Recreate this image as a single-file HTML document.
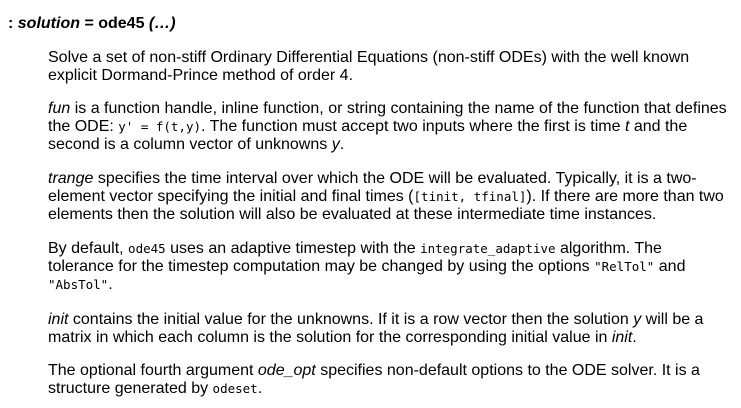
<!DOCTYPE html>
<html><head><style>
html,body{margin:0;padding:0;background:#fff;}
body{width:741px;height:408px;overflow:hidden;font-family:"Liberation Sans",sans-serif;font-size:16px;color:#000;}
.h{position:absolute;left:8px;top:15px;font-weight:bold;line-height:18px;white-space:nowrap;}
p{position:absolute;left:48px;margin:0;line-height:18px;white-space:nowrap;}
code{font-family:"DejaVu Sans Mono",monospace;font-size:12.5px;}
</style></head><body>
<div class="h">: <i>solution</i> = ode45 <i>(…)</i></div>
<p style="top:49px">Solve a set of non-stiff Ordinary Differential Equations (non-stiff ODEs) with the well known<br>explicit Dormand-Prince method of order 4.</p>
<p style="top:100px"><i>fun</i> is a function handle, inline function, or string containing the name of the function that defines<br>the ODE: <code>y' = f(t,y)</code>. The function must accept two inputs where the first is time <i>t</i> and the<br>second is a column vector of unknowns <i>y</i>.</p>
<p style="top:170px"><i>trange</i> specifies the time interval over which the ODE will be evaluated. Typically, it is a two-<br>element vector specifying the initial and final times (<code>[tinit, tfinal]</code>). If there are more than two<br>elements then the solution will also be evaluated at these intermediate time instances.</p>
<p style="top:240px">By default, <code>ode45</code> uses an adaptive timestep with the <code>integrate_adaptive</code> algorithm. The<br>tolerance for the timestep computation may be changed by using the options <code>"RelTol"</code> and<br><code>"AbsTol"</code>.</p>
<p style="top:311px"><i>init</i> contains the initial value for the unknowns. If it is a row vector then the solution <i>y</i> will be a<br>matrix in which each column is the solution for the corresponding initial value in <i>init</i>.</p>
<p style="top:362px">The optional fourth argument <i>ode_opt</i> specifies non-default options to the ODE solver. It is a<br>structure generated by <code>odeset</code>.</p>
</body></html>
